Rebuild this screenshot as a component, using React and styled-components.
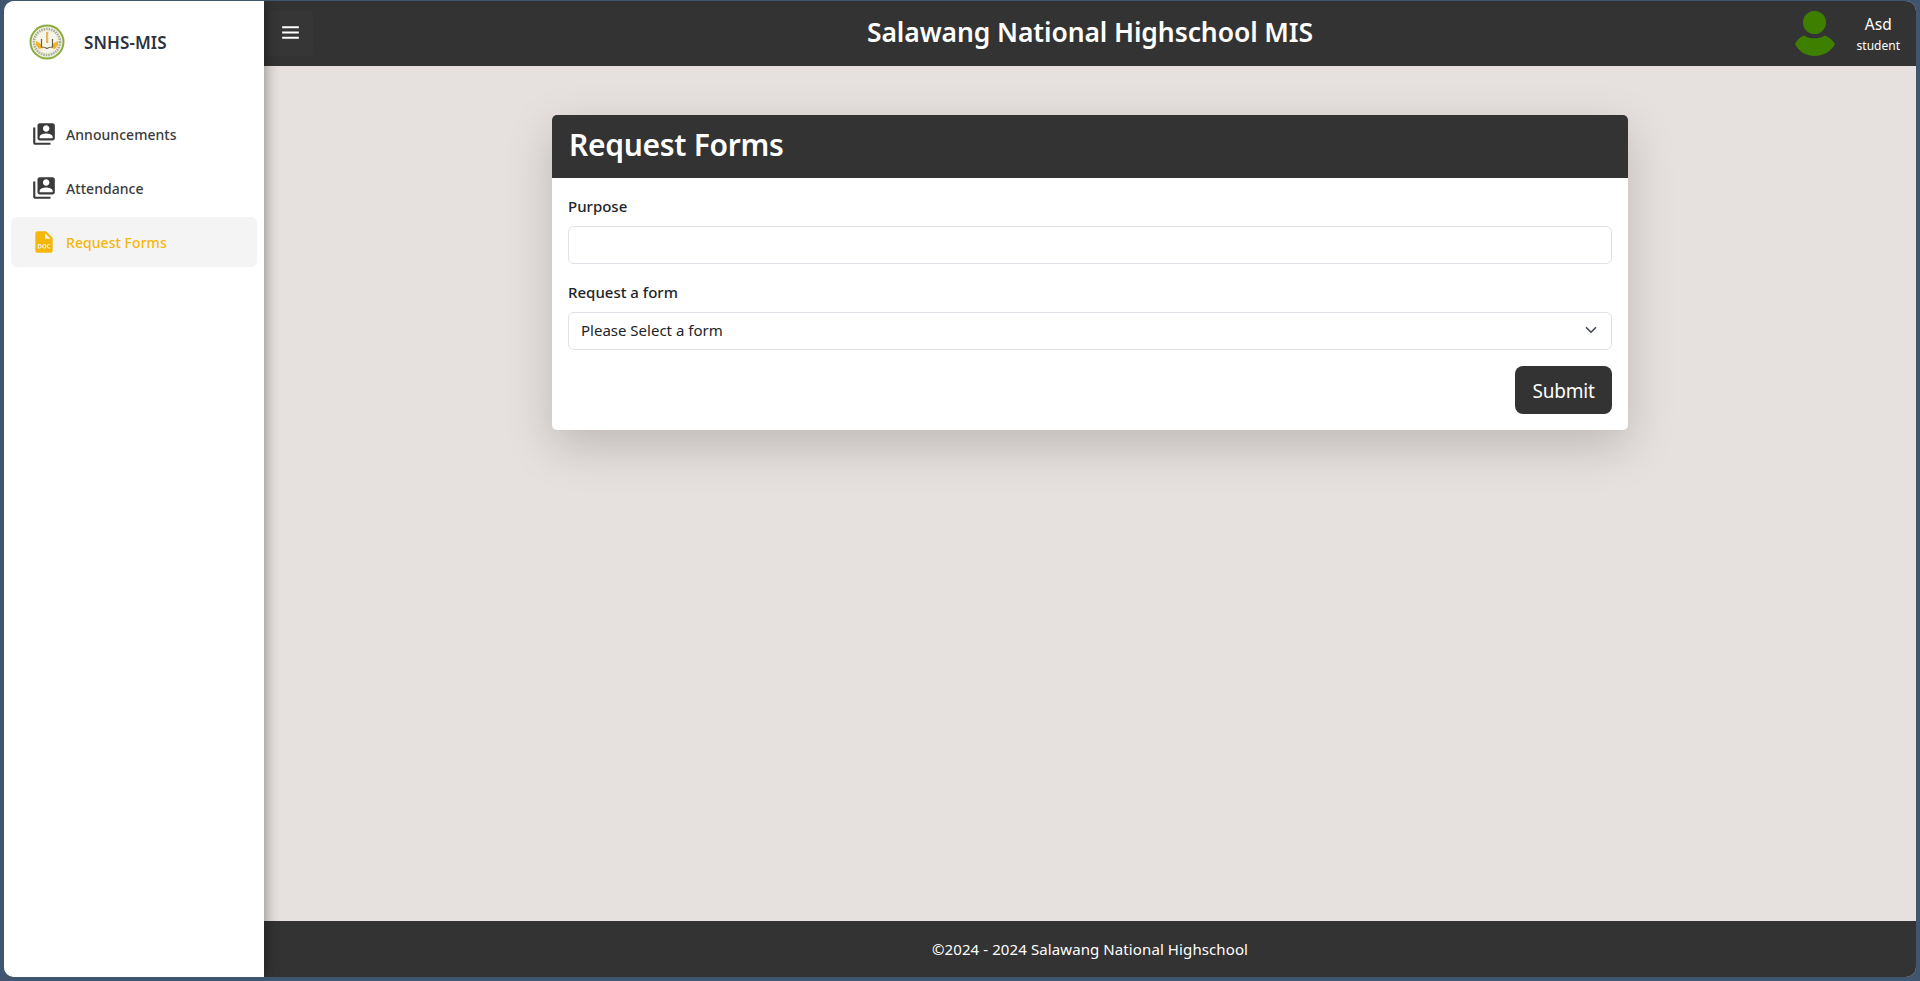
import React from 'react';
import styled, { createGlobalStyle } from 'styled-components';
import { MdSwitchAccount } from 'react-icons/md';
import { BiSolidFileDoc, BiMenu } from 'react-icons/bi';

const GlobalStyle = createGlobalStyle`
    html, body { margin: 0; height: 100%; background: #3f5570; overflow: hidden; }
    #root { height: 100%; }
    * { box-sizing: border-box; }
    body { font-family: "Noto Sans", "Open Sans", sans-serif; color: #212529; }
`;

const Frame = styled.div`
    height: 100vh;
    padding: 1px 4px 4px 4px;
`;

const Shell = styled.div`
    display: flex;
    height: 100%;
    border-radius: 10px;
    overflow: hidden;
    background: #e6e1de;
`;

const Sidebar = styled.aside`
    flex: 0 0 260px;
    background: #fff;
    box-shadow: 0 0 14px rgba(0, 0, 0, 0.45);
    z-index: 2;
    padding: 0 7px;
`;

const Brand = styled.div`
    display: flex;
    align-items: center;
    height: 82px;
    padding-left: 18px;
    gap: 19px;
`;

const BrandName = styled.span`
    font-size: 17px;
    font-weight: 600;
    color: #2b3340;
    letter-spacing: 0.1px;
`;

const Nav = styled.nav`
    display: flex;
    flex-direction: column;
    gap: 4px;
    margin-top: 26px;
`;

const NavItem = styled.a`
    display: flex;
    align-items: center;
    height: 50px;
    padding-left: 20px;
    gap: 9px;
    border-radius: 6px;
    font-size: 14px;
    font-weight: 500;
    letter-spacing: 0.05px;
    color: ${p => (p.$active ? '#f4b70a' : '#3b3b3b')};
    background: ${p => (p.$active ? '#f4f4f4' : 'transparent')};
    svg { font-size: 26px; flex: none; }
`;

const Main = styled.div`
    flex: 1;
    display: flex;
    flex-direction: column;
    min-width: 0;
`;

const Header = styled.header`
    display: grid;
    grid-template-columns: 1fr auto 1fr;
    align-items: center;
    height: 65px;
    flex: none;
    background: #333;
    color: #fff;
    padding: 0 4px;
`;

const MenuButton = styled.button`
    display: flex;
    align-items: center;
    justify-content: center;
    width: 45px;
    height: 45px;
    padding: 0 0 2px;
    border: 0;
    border-radius: 4px;
    background: #363636;
    color: #fff;
    font-size: 25px;
`;

const Title = styled.h1`
    margin: 0;
    padding-bottom: 4px;
    font-size: 26.5px;
    font-weight: 600;
    letter-spacing: -0.1px;
`;

const User = styled.div`
    justify-self: end;
    display: flex;
    align-items: center;
    gap: 22px;
    padding-right: 12px;
`;

const UserText = styled.div`
    display: flex;
    flex-direction: column;
    align-items: center;
    padding-top: 2px;
    line-height: 1;
`;

const UserName = styled.span`
    font-size: 15.5px;
    margin-bottom: 8px;
`;

const UserRole = styled.span`
    font-size: 12px;
`;

const Content = styled.main`
    flex: 1;
    padding: 49px 288px 0;
`;

const Card = styled.section`
    background: #fff;
    border-radius: 5px;
    box-shadow: 0 16px 48px rgba(0, 0, 0, 0.18);
    overflow: hidden;
`;

const CardHeader = styled.h2`
    margin: 0;
    height: 63px;
    display: flex;
    align-items: center;
    padding: 0 17px 5px;
    background: #333;
    color: #fff;
    font-size: 30px;
    font-weight: 600;
    letter-spacing: -0.3px;
`;

const CardBody = styled.form`
    display: flex;
    flex-direction: column;
    padding: 18px 16px 16px;
`;

const Label = styled.label`
    display: block;
    height: 30px;
    font-size: 15px;
    font-weight: 500;
    line-height: 20px;
    color: #212529;
`;

const Input = styled.input`
    display: block;
    width: 100%;
    height: 38px;
    margin-bottom: 18px;
    border: 1px solid #dee2e6;
    border-radius: 6px;
    background: #fff;
`;

const SelectBox = styled.div`
    display: flex;
    align-items: center;
    justify-content: space-between;
    height: 38px;
    padding: 0 14px 2px 12px;
    border: 1px solid #dee2e6;
    border-radius: 6px;
    font-size: 15px;
    color: #212529;
`;

const Actions = styled.div`
    display: flex;
    justify-content: flex-end;
    margin-top: 16px;
`;

const SubmitButton = styled.button`
    width: 97px;
    height: 48px;
    padding: 2px 0 0;
    border: 0;
    border-radius: 8px;
    background: #333;
    color: #fff;
    font-family: inherit;
    font-size: 19px;
    letter-spacing: -0.2px;
`;

const Footer = styled.footer`
    display: flex;
    align-items: center;
    justify-content: center;
    flex: none;
    height: 56px;
    background: #333;
    color: #fff;
    font-size: 15px;
    letter-spacing: 0.1px;
`;

const Logo = () => (
    <svg width="36" height="36" viewBox="0 0 36 36">
        <circle cx="18" cy="18" r="17.5" fill="#8aad3f" />
        <circle cx="18" cy="18" r="15.5" fill="#efeee0" />
        <circle cx="18" cy="18" r="13" fill="none" stroke="#a9ad98" strokeWidth="2.5" strokeDasharray="1.5 1" />
        <circle cx="18" cy="18" r="10.5" fill="#f7f4ea" />
        <path d="M7 17l4 2 3 5-4 1-3-4z" fill="#f0b429" />
        <path d="M29 17l-4 2-3 5 4 1 3-4z" fill="#f0b429" />
        <path d="M17 8h2.2v11H17z" fill="#e4b458" />
        <path d="M12.5 15v8c2.500 0 4 .3 5.500 1.500 1.500-1.200 3-1.500 5.500-1.500v-8" fill="none" stroke="#6b5a46" strokeWidth="1.200" />
    </svg>
);

const Avatar = () => (
    <svg width="40" height="45" viewBox="0 0 40 45">
        <circle cx="19.500" cy="11.500" r="11.500" fill="#3f7f00" />
        <path d="M0 33c2-4 5-7 9-8.500 3 2 6.500 2.800 10.500 2.800s7.500-.8 10.500-2.800c4 1.500 7.500 4.500 10 8.500-3.500 7-11 12-20.500 12S3.500 40 0 33z" fill="#3f7f00" />
    </svg>
);

const Chevron = () => (
    <svg width="12" height="12" viewBox="0 0 16 16">
        <path d="m2 5 6 6 6-6" fill="none" stroke="#444b52" strokeWidth="2.200" strokeLinecap="round" strokeLinejoin="round" />
    </svg>
);

const links = [
    { label: 'Announcements', icon: <MdSwitchAccount /> },
    { label: 'Attendance', icon: <MdSwitchAccount /> },
    { label: 'Request Forms', icon: <BiSolidFileDoc />, active: true },
];

const App = () => (
    <Frame>
        <GlobalStyle />
        <Shell>
            <Sidebar>
                <Brand>
                    <Logo />
                    <BrandName>SNHS-MIS</BrandName>
                </Brand>
                <Nav>
                    {links.map(link => (
                        <NavItem key={link.label} $active={link.active}>
                            {link.icon}
                            {link.label}
                        </NavItem>
                    ))}
                </Nav>
            </Sidebar>
            <Main>
                <Header>
                    <MenuButton type="button"><BiMenu /></MenuButton>
                    <Title>Salawang National Highschool MIS</Title>
                    <User>
                        <Avatar />
                        <UserText>
                            <UserName>Asd</UserName>
                            <UserRole>student</UserRole>
                        </UserText>
                    </User>
                </Header>
                <Content>
                    <Card>
                        <CardHeader>Request Forms</CardHeader>
                        <CardBody>
                            <Label>Purpose</Label>
                            <Input type="text" />
                            <Label>Request a form</Label>
                            <SelectBox>
                                Please Select a form
                                <Chevron />
                            </SelectBox>
                            <Actions>
                                <SubmitButton type="button">Submit</SubmitButton>
                            </Actions>
                        </CardBody>
                    </Card>
                </Content>
                <Footer>©2024 - 2024 Salawang National Highschool</Footer>
            </Main>
        </Shell>
    </Frame>
);

export default App;
